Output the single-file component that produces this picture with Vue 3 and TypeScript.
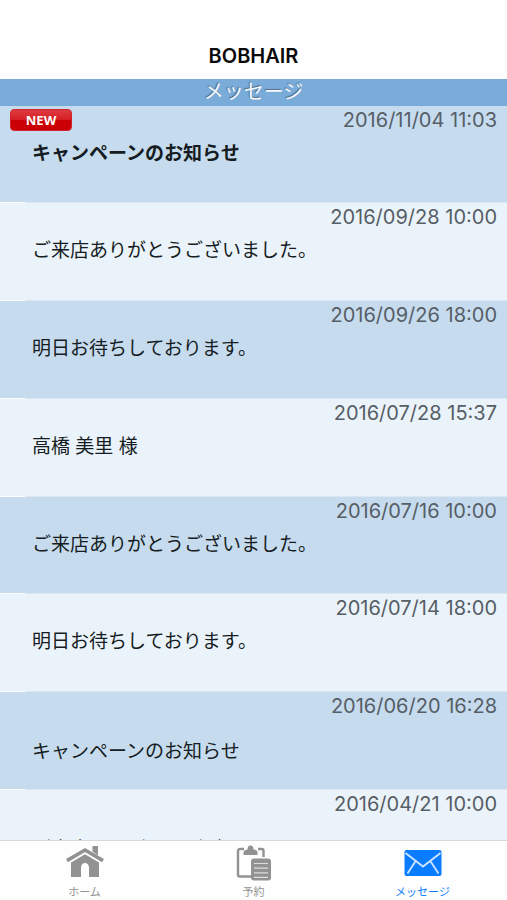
<script setup lang="ts">
interface Message {
  id: number
  date: string
  title: string
  unread?: boolean
  low?: boolean
}

interface Tab {
  key: 'home' | 'booking' | 'message'
  label: string
}

const messages: Message[] = [
  { id: 1, date: '2016/11/04 11:03', title: 'キャンペーンのお知らせ', unread: true },
  { id: 2, date: '2016/09/28 10:00', title: 'ご来店ありがとうございました。' },
  { id: 3, date: '2016/09/26 18:00', title: '明日お待ちしております。' },
  { id: 4, date: '2016/07/28 15:37', title: '高橋 美里 様' },
  { id: 5, date: '2016/07/16 10:00', title: 'ご来店ありがとうございました。' },
  { id: 6, date: '2016/07/14 18:00', title: '明日お待ちしております。' },
  { id: 7, date: '2016/06/20 16:28', title: 'キャンペーンのお知らせ', low: true },
  { id: 8, date: '2016/04/21 10:00', title: 'ご来店ありがとうございました。', low: true },
]

const tabs: Tab[] = [
  { key: 'home', label: 'ホーム' },
  { key: 'booking', label: '予約' },
  { key: 'message', label: 'メッセージ' },
]

const active: Tab['key'] = 'message'
</script>

<template>
  <div class="app">
    <header class="navbar">
      <h1>BOBHAIR</h1>
    </header>
    <h2 class="section">メッセージ</h2>

    <main class="list">
      <a
        v-for="m in messages"
        :key="m.id"
        href="#"
        class="row"
        :class="{ unread: m.unread, low: m.low }"
      >
        <span class="meta">
          <span v-if="m.unread" class="badge">NEW</span>
          <time class="date">{{ m.date }}</time>
        </span>
        <span class="title">{{ m.title }}</span>
      </a>
    </main>

    <nav class="tabbar">
      <a v-for="t in tabs" :key="t.key" href="#" class="tab" :class="{ active: t.key === active }">
        <svg v-if="t.key === 'home'" class="icon" viewBox="0 0 40 38" aria-hidden="true">
          <path d="M27.500 3h5.500v9.500l-5.500-4z" fill="currentColor" />
          <path d="M2 17.600 20 7l18 10.600" fill="none" stroke="currentColor" stroke-width="3.600" />
          <path d="M6 19.500 20 11.300l14 8.200V34H24V24.500a4 4.500 0 0 0-8 0V34H6z" fill="currentColor" />
        </svg>
        <svg v-else-if="t.key === 'booking'" class="icon" viewBox="0 0 40 38" aria-hidden="true">
          <path d="M10 6H6a2 2 0 0 0-2 2v23.500a2 2 0 0 0 2 2H17M24 6h3.500a2 2 0 0 1 2 2v6" fill="none" stroke="currentColor" stroke-width="2.400" />
          <path d="M9.500 12v-2.500q0-2.500 4-3a3 4 0 0 1 6 0q4 .5 4 3V12z" fill="currentColor" />
          <rect x="17" y="15.500" width="20" height="22" rx="3" fill="currentColor" />
          <path d="M20 20.500h14M20 25.200h14M20 29.900h14M20 34.300h14" stroke="#ddd" stroke-width="1.200" />
        </svg>
        <svg v-else class="icon" viewBox="0 0 40 38" aria-hidden="true">
          <rect x="1.500" y="7" width="37" height="26" rx="2" fill="currentColor" />
          <path d="M2.500 10 20 23.500 37.500 10M4.500 30.500l8.500-13M35.500 30.500 27 17.500" fill="none" stroke="#cde5ff" stroke-width="1.800" />
        </svg>
        <span class="tab-label">{{ t.label }}</span>
      </a>
    </nav>
  </div>
</template>

<style>
body {
  margin: 0;
}
</style>

<style scoped>
.app {
  display: flex;
  flex-direction: column;
  height: 100vh;
  background: #fefefe;
  font-family: Inter, 'Noto Sans CJK JP', sans-serif;
}

.navbar {
  flex: none;
  padding: 42px 16px 9px;
  text-align: center;
}

.navbar h1 {
  margin: 0;
  font-size: 20px;
  line-height: 28px;
  font-weight: 600;
  color: #0a0a0a;
}

.section {
  flex: none;
  margin: 0;
  background: #7aacda;
  color: #f4f8fc;
  font-size: 20px;
  line-height: 27px;
  font-weight: 400;
  text-align: center;
  text-shadow: -1px -1px 1px #566f88;
}

.list {
  flex: 1;
  min-height: 0;
  overflow: hidden;
}

.row {
  display: flex;
  flex-direction: column;
  box-sizing: border-box;
  height: 98px;
  background: linear-gradient(90deg, #fdfeff 25px, #dce7f1 25px) bottom / 100% 1px no-repeat #ebf3fa;
  color: #151c22;
  text-decoration: none;
}

.row:nth-child(odd) {
  background-color: #c6dbee;
}

.row:nth-child(4n + 1) {
  height: 97px;
}

.meta {
  display: flex;
  align-items: center;
  padding: 0 10px;
  height: 28px;
}

.date {
  margin-left: auto;
  color: #565e66;
  font-size: 20px;
  line-height: 28px;
}

.badge {
  box-sizing: border-box;
  width: 62px;
  border: 1px solid #d3242b;
  border-radius: 4px;
  background: linear-gradient(#dc3b40, #d62025 48%, #cb0006 52%, #c90005);
  color: #fff;
  font-family: 'Open Sans', sans-serif;
  font-size: 13px;
  line-height: 20px;
  font-weight: 700;
  text-align: center;
}

.title {
  padding: 6px 32px 0;
  font-size: 19px;
  line-height: 28px;
}

.unread .title {
  font-weight: 700;
}

.low .title {
  padding-top: 18px;
}

.tabbar {
  flex: none;
  display: grid;
  grid-template-columns: repeat(3, 1fr);
  border-top: 1px solid #d3d9de;
  background: #fefefe;
}

.tab {
  display: flex;
  flex-direction: column;
  align-items: center;
  gap: 3px;
  padding: 2px 0 0;
  color: #929292;
  text-decoration: none;
}

.tab.active {
  color: #0a7cff;
}

.icon {
  width: 40px;
  height: 38px;
}

.tab-label {
  font-size: 11px;
  line-height: 16px;
}
</style>
